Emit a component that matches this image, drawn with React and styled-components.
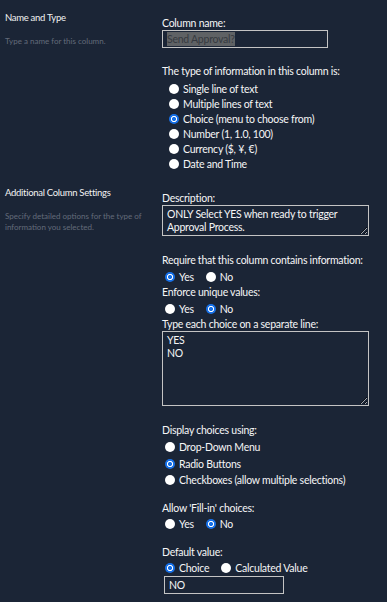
import React from "react";
import styled, { createGlobalStyle } from "styled-components";

const GlobalStyle = createGlobalStyle`
  html, body {
    margin: 0;
    padding: 0;
    background: #1b2536;
  }
  body {
    font-family: Lato, "Noto Sans", sans-serif;
    color: #f4f4f4;
  }
`;

const typeOptions = [
  { label: "Single line of text" },
  { label: "Multiple lines of text" },
  { label: "Choice (menu to choose from)", checked: true },
  { label: "Number (1, 1.0, 100)" },
  { label: "Currency ($, ¥, €)" },
  { label: "Date and Time" },
];

const displayOptions = [
  { label: "Drop-Down Menu" },
  { label: "Radio Buttons", checked: true },
  { label: "Checkboxes (allow multiple selections)" },
];

const Radio = ({ label, checked }) => (
  <RadioLabel>
    <Dot $checked={checked} />
    {label}
  </RadioLabel>
);

const YesNo = ({ yes }) => (
  <InlineRow>
    <Radio label="Yes" checked={yes} />
    <Radio label="No" checked={!yes} />
  </InlineRow>
);

const App = () => {
  return (
    <Page>
      <GlobalStyle />
      <Section>
        <Info $top={11}>
          <Title>Name and Type</Title>
          <Hint>Type a name for this column.</Hint>
        </Info>
        <Fields $top={16}>
          <Label>Column name:</Label>
          <TextBox $width={166}>
            <Selected>Send Approval?</Selected>
          </TextBox>
          <Label $gap={16}>The type of information in this column is:</Label>
          <RadioList $indent={7} $gap={3} $row={15}>
            {typeOptions.map((o) => (
              <Radio key={o.label} {...o} />
            ))}
          </RadioList>
        </Fields>
      </Section>

      <Section>
        <Info $top={15}>
          <Title>Additional Column Settings</Title>
          <Hint>Specify detailed options for the type of information you selected.</Hint>
        </Info>
        <Fields $top={20}>
          <Label>Description:</Label>
          <Area
            $height={31}
            readOnly
            defaultValue="ONLY Select YES when ready to trigger Approval Process."
          />
          <Label $gap={17}>Require that this column contains information:</Label>
          <YesNo yes />
          <Label $gap={1}>Enforce unique values:</Label>
          <YesNo />
          <Label $gap={1}>Type each choice on a separate line:</Label>
          <Area $height={75} readOnly defaultValue={"YES\nNO"} />
          <Label $gap={17}>Display choices using:</Label>
          <RadioList $indent={3} $gap={2} $row={16.5}>
            {displayOptions.map((o) => (
              <Radio key={o.label} {...o} />
            ))}
          </RadioList>
          <Label $gap={12}>Allow 'Fill-in' choices:</Label>
          <YesNo />
          <Label $gap={13}>Default value:</Label>
          <InlineRow>
            <Radio label="Choice" checked />
            <Radio label="Calculated Value" />
          </InlineRow>
          <TextBox $width={120} $indent={2}>NO</TextBox>
        </Fields>
      </Section>
    </Page>
  );
};

const Page = styled.div`
  width: 387px;
  min-height: 602px;
  box-sizing: border-box;
`;

const Section = styled.div`
  display: grid;
  grid-template-columns: 162px 1fr;
`;

const Info = styled.div`
  padding: ${({ $top }) => $top}px 14px 0 5px;
  display: flex;
  flex-direction: column;
  gap: 11px;
`;

const Title = styled.div`
  font-size: 9.5px;
  line-height: 14px;
  letter-spacing: -0.3px;
  color: #f2f2f2;
`;

const Hint = styled.div`
  font-size: 8px;
  line-height: 11px;
  color: #636b7a;
`;

const Fields = styled.div`
  padding-top: ${({ $top }) => $top}px;
  display: flex;
  flex-direction: column;
  align-items: flex-start;
`;

const Label = styled.div`
  font-size: 10.5px;
  line-height: 14px;
  letter-spacing: -0.25px;
  margin-top: ${({ $gap }) => $gap || 0}px;
  color: #f6f6f6;
  white-space: nowrap;
`;

const TextBox = styled.div`
  box-sizing: border-box;
  width: ${({ $width }) => $width}px;
  height: 18px;
  margin-left: ${({ $indent }) => $indent || 0}px;
  border: 1px solid #c4c4c4;
  padding: 0 4px;
  font-size: 10.5px;
  letter-spacing: -0.25px;
  line-height: 16px;
  color: #f6f6f6;
  display: flex;
  align-items: center;
`;

const Selected = styled.span`
  background: #5f6265;
  color: #363a40;
  line-height: 14px;
`;

const Area = styled.textarea`
  box-sizing: border-box;
  width: 207px;
  height: ${({ $height }) => $height}px;
  margin: 0;
  padding: 2px 4px;
  background: transparent;
  border: 1px solid #c4c4c4;
  border-radius: 0;
  color: #f6f6f6;
  font-family: Lato, "Noto Sans", sans-serif;
  font-size: 10.5px;
  letter-spacing: -0.25px;
  line-height: 13px;
  resize: both;
  outline: none;
  overflow: hidden;
`;

const RadioList = styled.div`
  display: flex;
  flex-direction: column;
  margin-top: ${({ $gap }) => $gap}px;
  padding-left: ${({ $indent }) => $indent}px;

  & > label {
    height: ${({ $row }) => $row}px;
  }
`;

const InlineRow = styled.div`
  display: flex;
  gap: 12px;
  height: 15px;
  align-items: center;
  padding-left: 3px;
  margin-top: 2px;
`;

const RadioLabel = styled.label`
  display: flex;
  align-items: center;
  gap: 4px;
  font-size: 10.5px;
  letter-spacing: -0.25px;
  color: #f6f6f6;
  white-space: nowrap;
`;

const Dot = styled.span`
  box-sizing: border-box;
  width: 10px;
  height: 10px;
  border-radius: 50%;
  flex: none;
  background: ${({ $checked }) =>
    $checked
      ? "radial-gradient(circle, #1670e8 0 1.8px, #ffffff 2.3px 2.8px, #1670e8 3.3px)"
      : "#ffffff"};
`;

export default App;
